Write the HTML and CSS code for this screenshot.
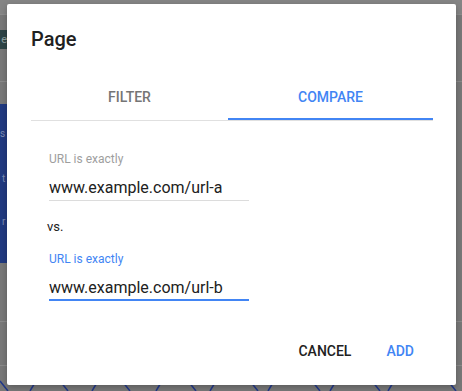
FILE: index.html
```html
<!DOCTYPE html>
<html lang="en">
<head>
  <meta charset="UTF-8">
  <meta name="viewport" content="width=device-width, initial-scale=1.0">
  <title>Page</title>
  <link rel="stylesheet" href="styles.css">
</head>
<body>
  <!-- page under the dialog, already dimmed -->
  <div class="backdrop">
    <div class="bd-top"></div>
    <div class="bd-row">
      <div class="bd-chip">e</div>
    </div>
    <div class="bd-rule"></div>
    <div class="bd-panel">
      <div class="bd-side">
        <span class="s1">s</span>
        <span class="s2">t</span>
        <span class="s3">r</span>
      </div>
    </div>
    <div class="bd-rule low"></div>
    <div class="bd-rule lower"></div>
    <svg class="bd-waves" width="462" height="14" viewBox="0 0 462 14">
      <path d="M0 4 L8 14 M30 14 L36 4 M60 4 L68 14 M92 14 L98 4 M122 4 L130 14 M156 14 L162 4 M188 4 L196 14 M210 14 L216 4 M250 4 L258 14 M268 14 L274 4 M312 4 L320 14 M330 14 L336 4 M372 4 L380 14 M388 14 L394 4 M448 4 L456 14" fill="none" stroke="#22398a" stroke-width="1.5"/>
    </svg>
  </div>

  <div class="dialog">
    <h1 class="title">Page</h1>

    <div class="tabs">
      <div class="tab">Filter</div>
      <div class="tab active">Compare</div>
    </div>

    <div class="body">
      <div class="field">
        <label for="urlA">URL is exactly</label>
        <input type="text" id="urlA" value="www.example.com/url-a">
      </div>

      <div class="vs">vs.</div>

      <div class="field focused">
        <label for="urlB">URL is exactly</label>
        <input type="text" id="urlB" value="www.example.com/url-b">
      </div>
    </div>

    <div class="actions">
      <button class="btn">Cancel</button>
      <button class="btn primary">Add</button>
    </div>
  </div>
</body>
</html>
```

FILE: styles.css
```css
body {
  margin: 0;
  width: 462px;
  height: 391px;
  overflow: hidden;
  position: relative;
  background: #787878;
  font-family: Roboto, "Liberation Sans", sans-serif;
  color: #212121;
}
.backdrop {
  height: 391px;
  display: flex;
  flex-direction: column;
}
.bd-top {
  height: 14px;
  background: #858585;
  border-bottom: 1px solid #8c8c8c;
}
.bd-row {
  margin-top: 15px;
  height: 19px;
}
.bd-chip {
  width: 7px;
  height: 19px;
  background: #2e4446;
  color: #8fa0a0;
  font-size: 11px;
  line-height: 19px;
  text-align: right;
}
.bd-rule {
  margin-top: 32px;
  height: 1px;
  background: #8a8a8a;
}
.bd-rule.low {
  margin-top: 58px;
}
.bd-rule.lower {
  margin-top: 43px;
}
.bd-panel {
  margin-top: 22px;
  height: 159px;
}
.bd-side {
  width: 7px;
  height: 100%;
  background: #213a80;
  color: #7d8cb4;
  font-size: 10px;
  display: flex;
  flex-direction: column;
  align-items: flex-start;
}
.bd-side span {
  display: block;
}
.bd-side .s1 { margin-top: 24px; }
.bd-side .s2 { margin-top: 34px; margin-left: 2px; }
.bd-side .s3 { margin-top: 32px; margin-left: 2px; }
.bd-waves {
  margin-top: auto;
  display: block;
}

.dialog {
  position: absolute;
  left: 7px;
  top: 4px;
  width: 449px;
  height: 381px;
  box-sizing: border-box;
  padding: 21px 23px 0 24px;
  background: #fff;
  border-radius: 2px;
  box-shadow: 0 2px 6px rgba(0, 0, 0, 0.25);
}
.title {
  margin: 0 0 19px;
  font-size: 20px;
  line-height: 28px;
  font-weight: 500;
  color: #212121;
}
.tabs {
  display: grid;
  grid-template-columns: 197px 1fr;
  border-bottom: 1px solid #e0e0e0;
}
.tab {
  box-sizing: border-box;
  height: 48px;
  padding-top: 17px;
  text-align: center;
  text-transform: uppercase;
  font-size: 14px;
  line-height: 16px;
  font-weight: 500;
  color: #757575;
  border-bottom: 2px solid transparent;
}
.tab.active {
  color: #4285f4;
  border-bottom-color: #4285f4;
}
.body {
  padding: 30px 0 0 16px;
}
.field {
  width: 200px;
  margin-left: 2px;
}
.field label {
  display: block;
  font-size: 12px;
  line-height: 16px;
  color: #9e9e9e;
  margin-bottom: 8px;
}
.field input {
  display: block;
  width: 100%;
  box-sizing: border-box;
  height: 26px;
  margin: 0;
  padding: 0 0 1px;
  border: none;
  border-bottom: 1px solid #dcdcdc;
  font-family: inherit;
  font-size: 16px;
  line-height: 24px;
  color: #212121;
  outline: none;
  background: transparent;
}
.field.focused label {
  color: #4285f4;
}
.field.focused input {
  padding-bottom: 0;
  border-bottom: 2px solid #4285f4;
}
.vs {
  margin: 16px 0 14px;
  font-size: 13px;
  line-height: 20px;
  color: #212121;
}
.actions {
  display: flex;
  justify-content: flex-end;
  gap: 3px;
  margin-top: 32px;
  padding-right: 3px;
}
.btn {
  height: 36px;
  padding: 0 16px;
  border: none;
  background: transparent;
  font-family: inherit;
  font-size: 14px;
  font-weight: 500;
  text-transform: uppercase;
  color: #212121;
  cursor: pointer;
}
.btn.primary {
  color: #4285f4;
}
```
